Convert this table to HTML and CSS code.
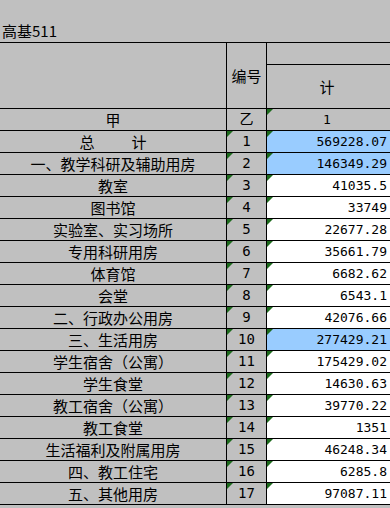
FILE: index.html
```html
<!DOCTYPE html>
<html lang="zh-CN">
<head>
<meta charset="utf-8">
<link rel="stylesheet" href="styles.css">
</head>
<body>
<div class="title">高基511</div>
<table class="sheet">
  <colgroup><col class="c1"><col class="c2"><col class="c3"></colgroup>
  <tr class="h1">
    <td class="name" rowspan="2"></td>
    <td class="code" rowspan="2">编号</td>
    <td class="val hb"></td>
  </tr>
  <tr class="h2">
    <td class="val hc">计</td>
  </tr>
  <tr><td class="name">甲</td><td class="code">乙</td><td class="val gray center mark">1</td></tr>
  <tr><td class="name">总<span class="gap">计</span></td><td class="code mark">1</td><td class="val blue mark">569228.07</td></tr>
  <tr><td class="name">一、教学科研及辅助用房</td><td class="code mark">2</td><td class="val blue mark">146349.29</td></tr>
  <tr><td class="name">教室</td><td class="code mark">3</td><td class="val mark">41035.5</td></tr>
  <tr><td class="name">图书馆</td><td class="code mark">4</td><td class="val mark">33749</td></tr>
  <tr><td class="name">实验室、实习场所</td><td class="code mark">5</td><td class="val mark">22677.28</td></tr>
  <tr><td class="name">专用科研用房</td><td class="code mark">6</td><td class="val mark">35661.79</td></tr>
  <tr><td class="name">体育馆</td><td class="code mark">7</td><td class="val mark">6682.62</td></tr>
  <tr><td class="name">会堂</td><td class="code mark">8</td><td class="val mark">6543.1</td></tr>
  <tr><td class="name">二、行政办公用房</td><td class="code mark">9</td><td class="val mark">42076.66</td></tr>
  <tr><td class="name">三、生活用房</td><td class="code mark">10</td><td class="val blue mark">277429.21</td></tr>
  <tr><td class="name">学生宿舍（公寓）</td><td class="code mark">11</td><td class="val mark">175429.02</td></tr>
  <tr><td class="name">学生食堂</td><td class="code mark">12</td><td class="val mark">14630.63</td></tr>
  <tr><td class="name">教工宿舍（公寓）</td><td class="code mark">13</td><td class="val mark">39770.22</td></tr>
  <tr><td class="name">教工食堂</td><td class="code mark">14</td><td class="val mark">1351</td></tr>
  <tr><td class="name">生活福利及附属用房</td><td class="code mark">15</td><td class="val mark">46248.34</td></tr>
  <tr><td class="name">四、教工住宅</td><td class="code mark">16</td><td class="val mark">6285.8</td></tr>
  <tr><td class="name">五、其他用房</td><td class="code mark">17</td><td class="val mark">97087.11</td></tr>
</table>
</body>
</html>
```
FILE: styles.css
```css
html, body {
  margin: 0;
  padding: 0;
  background: #c0c0c0;
  overflow: hidden;
}
body {
  font-family: "Noto Sans CJK SC", "Noto Sans", sans-serif;
  font-size: 15px;
  color: #000;
}
.title {
  height: 22px;
  padding: 20px 0 0 2px;
  line-height: 22px;
  white-space: nowrap;
}
.sheet {
  border-collapse: separate;
  border-spacing: 0;
  border-top: 1px solid #000;
  table-layout: fixed;
  width: 400px;
}
.c1 { width: 227px; }
.c2 { width: 40px; }
.c3 { width: 133px; }
.sheet td {
  position: relative;
  padding: 0;
  height: 21px;
  line-height: 21px;
  border-bottom: 1px solid #000;
  white-space: nowrap;
  overflow: hidden;
  box-sizing: content-box;
}
.sheet .h1 td { height: 21px; }
.sheet .h2 td { height: 43px; }
.sheet .name {
  text-align: center;
  border-right: 1px solid #000;
}
.gap {
  margin-left: 37px;
}
.sheet .code {
  text-align: center;
  border-right: 1px solid #000;
  font-family: "DejaVu Sans Mono", "Noto Sans CJK SC", monospace;
  font-size: 14px;
}
.sheet .h1 .code {
  font-family: "Noto Sans CJK SC", sans-serif;
  font-size: 15px;
}
.sheet .val {
  background: #fff;
  text-align: right;
  padding-right: 13px;
  font-family: "DejaVu Sans Mono", monospace;
  font-size: 13px;
}
.sheet .val.hb, .sheet .val.hc, .sheet .val.gray {
  background: #c0c0c0;
}
.sheet .val.hc {
  text-align: center;
  font-family: "Noto Sans CJK SC", sans-serif;
  font-size: 15px;
}
.sheet .val.center {
  text-align: center;
}
.sheet .val.blue {
  background: #99ccff;
}
.sheet .mark::before {
  content: "";
  position: absolute;
  left: 0;
  top: 0;
  width: 0;
  height: 0;
  border-top: 6px solid #1d6b1d;
  border-right: 6px solid transparent;
}
```
